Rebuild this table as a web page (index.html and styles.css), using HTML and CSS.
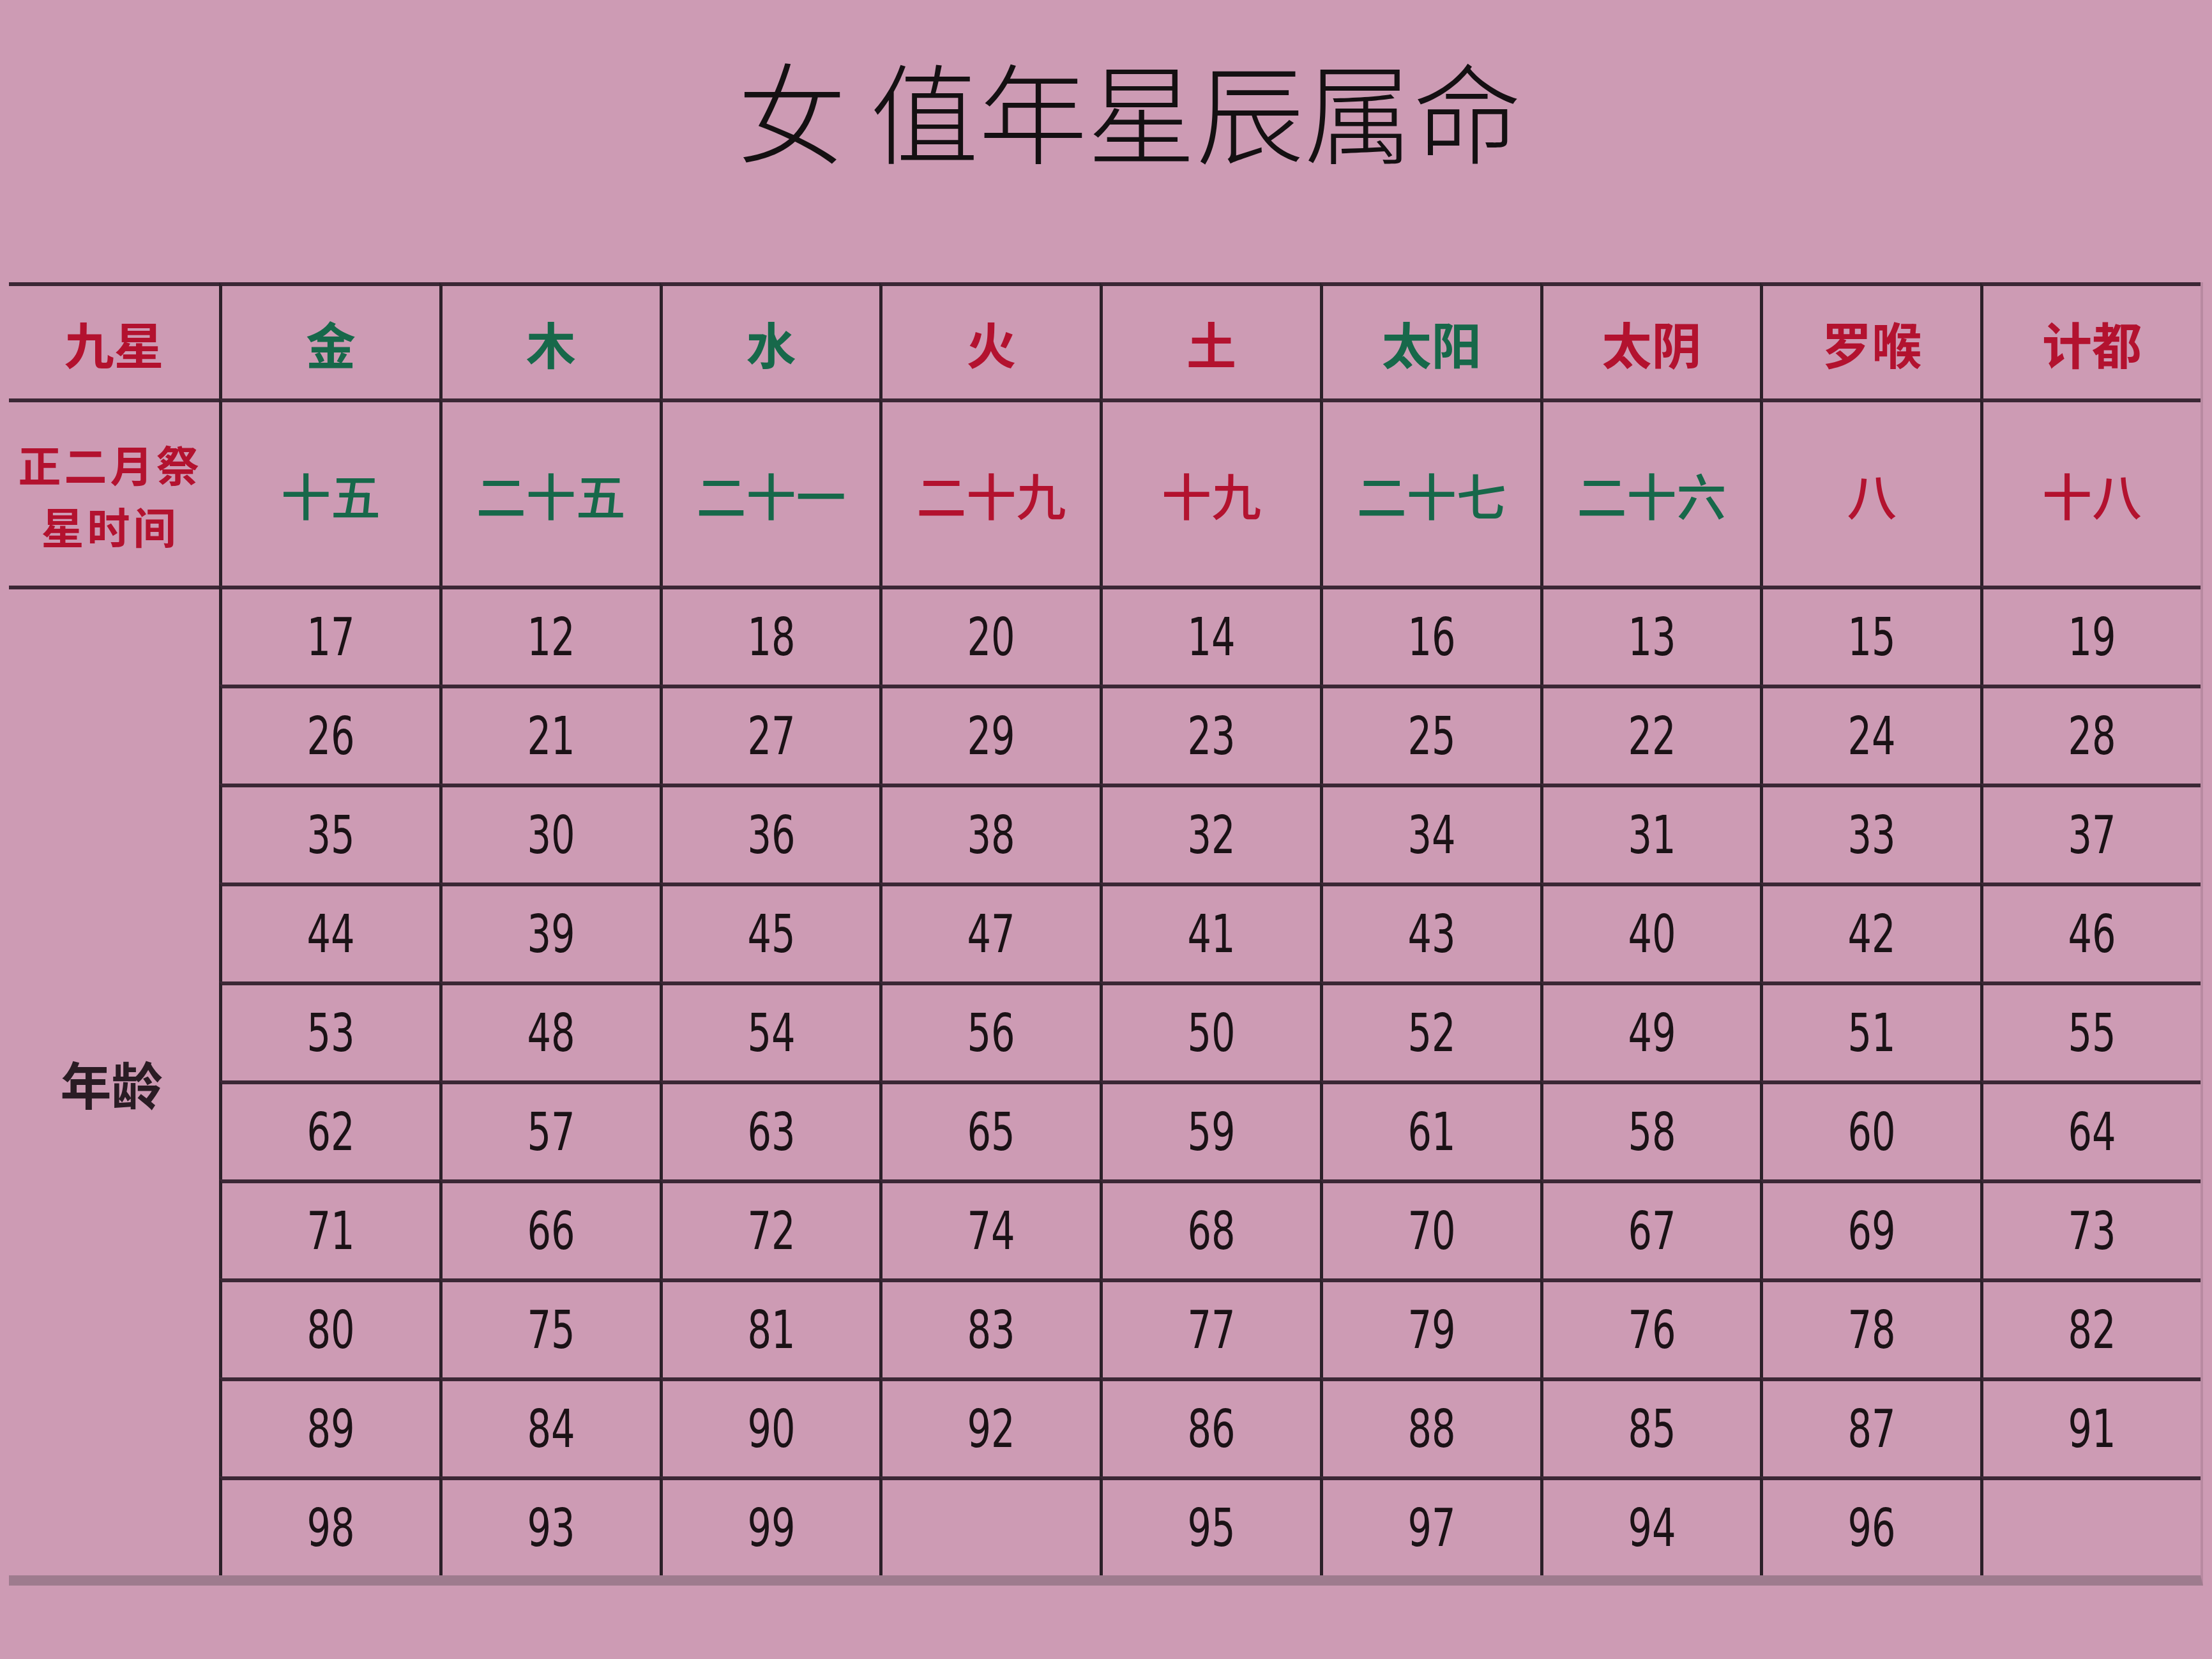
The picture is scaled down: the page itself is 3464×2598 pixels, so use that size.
FILE: index.html
```html
<!DOCTYPE html>
<html lang="zh-CN">
<head>
<meta charset="utf-8">
<title>女 值年星辰属命</title>
<link rel="stylesheet" href="styles.css">
</head>
<body>
<div class="page">
  <header class="title-bar">
    <h1 class="title">女 值年星辰属命</h1>
  </header>
  <div class="chart">
    <div class="cell head red first">九星</div>
    <div class="cell head green">金</div>
    <div class="cell head green">木</div>
    <div class="cell head green">水</div>
    <div class="cell head red">火</div>
    <div class="cell head red">土</div>
    <div class="cell head green">太阳</div>
    <div class="cell head red">太阴</div>
    <div class="cell head red">罗喉</div>
    <div class="cell head red">计都</div>

    <div class="cell sublabel red first">正二月祭<br>星时间</div>
    <div class="cell sub green">十五</div>
    <div class="cell sub green">二十五</div>
    <div class="cell sub green">二十一</div>
    <div class="cell sub red">二十九</div>
    <div class="cell sub red">十九</div>
    <div class="cell sub green">二十七</div>
    <div class="cell sub green">二十六</div>
    <div class="cell sub red">八</div>
    <div class="cell sub red">十八</div>

    <div class="cell age first">年龄</div>
    <div class="cell num"><span>17</span></div><div class="cell num"><span>12</span></div><div class="cell num"><span>18</span></div><div class="cell num"><span>20</span></div><div class="cell num"><span>14</span></div><div class="cell num"><span>16</span></div><div class="cell num"><span>13</span></div><div class="cell num"><span>15</span></div><div class="cell num"><span>19</span></div>
    <div class="cell num"><span>26</span></div><div class="cell num"><span>21</span></div><div class="cell num"><span>27</span></div><div class="cell num"><span>29</span></div><div class="cell num"><span>23</span></div><div class="cell num"><span>25</span></div><div class="cell num"><span>22</span></div><div class="cell num"><span>24</span></div><div class="cell num"><span>28</span></div>
    <div class="cell num"><span>35</span></div><div class="cell num"><span>30</span></div><div class="cell num"><span>36</span></div><div class="cell num"><span>38</span></div><div class="cell num"><span>32</span></div><div class="cell num"><span>34</span></div><div class="cell num"><span>31</span></div><div class="cell num"><span>33</span></div><div class="cell num"><span>37</span></div>
    <div class="cell num"><span>44</span></div><div class="cell num"><span>39</span></div><div class="cell num"><span>45</span></div><div class="cell num"><span>47</span></div><div class="cell num"><span>41</span></div><div class="cell num"><span>43</span></div><div class="cell num"><span>40</span></div><div class="cell num"><span>42</span></div><div class="cell num"><span>46</span></div>
    <div class="cell num"><span>53</span></div><div class="cell num"><span>48</span></div><div class="cell num"><span>54</span></div><div class="cell num"><span>56</span></div><div class="cell num"><span>50</span></div><div class="cell num"><span>52</span></div><div class="cell num"><span>49</span></div><div class="cell num"><span>51</span></div><div class="cell num"><span>55</span></div>
    <div class="cell num"><span>62</span></div><div class="cell num"><span>57</span></div><div class="cell num"><span>63</span></div><div class="cell num"><span>65</span></div><div class="cell num"><span>59</span></div><div class="cell num"><span>61</span></div><div class="cell num"><span>58</span></div><div class="cell num"><span>60</span></div><div class="cell num"><span>64</span></div>
    <div class="cell num"><span>71</span></div><div class="cell num"><span>66</span></div><div class="cell num"><span>72</span></div><div class="cell num"><span>74</span></div><div class="cell num"><span>68</span></div><div class="cell num"><span>70</span></div><div class="cell num"><span>67</span></div><div class="cell num"><span>69</span></div><div class="cell num"><span>73</span></div>
    <div class="cell num"><span>80</span></div><div class="cell num"><span>75</span></div><div class="cell num"><span>81</span></div><div class="cell num"><span>83</span></div><div class="cell num"><span>77</span></div><div class="cell num"><span>79</span></div><div class="cell num"><span>76</span></div><div class="cell num"><span>78</span></div><div class="cell num"><span>82</span></div>
    <div class="cell num"><span>89</span></div><div class="cell num"><span>84</span></div><div class="cell num"><span>90</span></div><div class="cell num"><span>92</span></div><div class="cell num"><span>86</span></div><div class="cell num"><span>88</span></div><div class="cell num"><span>85</span></div><div class="cell num"><span>87</span></div><div class="cell num"><span>91</span></div>
    <div class="cell num"><span>98</span></div><div class="cell num"><span>93</span></div><div class="cell num"><span>99</span></div><div class="cell num"></div><div class="cell num"><span>95</span></div><div class="cell num"><span>97</span></div><div class="cell num"><span>94</span></div><div class="cell num"><span>96</span></div><div class="cell num"></div>
  </div>
</div>
</body>
</html>
```

FILE: styles.css
```css
html, body {
  margin: 0;
  padding: 0;
  background: #cd9bb4;
}

.page {
  width: 3464px;
  height: 2598px;
  background: #cd9bb4;
  font-family: "Noto Sans CJK SC", "Noto Sans", sans-serif;
}

.title-bar {
  height: 442px;
  box-sizing: border-box;
  padding-top: 84px;
  padding-left: 74px;
  text-align: center;
}

.title {
  margin: 0;
  font-size: 170px;
  line-height: 172px;
  font-weight: 300;
  color: #141012;
}

.chart {
  margin-left: 14px;
  width: 3436px;
  box-sizing: border-box;
  display: grid;
  grid-template-columns: 329px repeat(9, 1fr);
  grid-template-rows: 182px 293px repeat(10, 155px);
  border-bottom: 16px solid #9e7b8e;
  border-right: 4px solid #b88aa1;
}

.cell {
  box-sizing: border-box;
  border-top: 6px solid #3b2735;
  border-left: 5px solid #2c2029;
  display: flex;
  align-items: center;
  justify-content: center;
  text-align: center;
}

.cell.first {
  border-left: none;
}

.red { color: #b3122f; }
.green { color: #17684a; }

.head {
  font-size: 78px;
  font-weight: 700;
  padding-top: 2px;
}

.sublabel {
  font-size: 67px;
  line-height: 97px;
  letter-spacing: 5px;
  font-weight: 700;
  padding-right: 12px;
}

.sub {
  font-size: 78px;
  font-weight: 500;
}

.age {
  grid-row: span 10;
  font-size: 80px;
  font-weight: 600;
  color: #2a1c24;
  padding-right: 8px;
}

.num {
  font-family: "DejaVu Sans Condensed", "DejaVu Sans", sans-serif;
  font-stretch: condensed;
  font-size: 82px;
  color: #1b1216;
}

.num span {
  display: inline-block;
  transform: scaleX(0.8);
}
```
